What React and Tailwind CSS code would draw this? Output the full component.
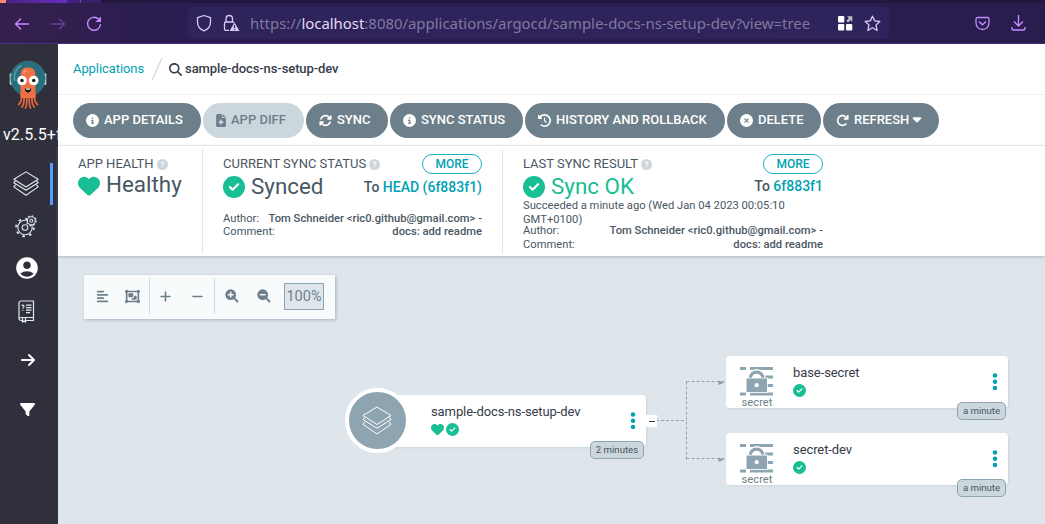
import React from 'react';
import {
  FaCircleInfo, FaFileMedical, FaArrowsRotate, FaClockRotateLeft, FaCircleXmark, FaArrowRotateRight,
  FaCaretDown, FaCircleQuestion, FaHeart, FaCircleCheck, FaMagnifyingGlass, FaAlignLeft, FaObjectGroup,
  FaPlus, FaMinus, FaArrowRight, FaFilter,
} from 'react-icons/fa6';
import { MdAccountCircle } from 'react-icons/md';

function Layers({ size, width = 1.2 }) {
  return (
    <svg width={size} height={size} viewBox="0 0 30 30" fill="none" stroke="currentColor" strokeWidth={width} strokeLinejoin="round" className="shrink-0">
      <path d="M15 1 29 9.5 15 18.5 1 9.5Z" />
      <path d="M3 11.2 1 13.5 15 22.3 29 13.5 27 11.2" />
      <path d="M3 15.7 1 18.300 15 28 29 18.300 27 15.7" />
    </svg>
  );
}

function Zoom({ minus }) {
  return (
    <svg width="14" height="14" viewBox="0 0 14 14" className="shrink-0">
      <circle cx="5.700" cy="5.700" r="5.400" fill="#6d7f8b" />
      <path d="M9 9 13 13" stroke="#6d7f8b" strokeWidth="1.900" />
      <path d={minus ? 'M2.800 5.700H8.600' : 'M2.800 5.700H8.600M5.700 2.800V8.600'} stroke="#f8fbfb" strokeWidth="1.500" />
    </svg>
  );
}

function Dots() {
  return (
    <svg width="6" height="18" viewBox="0 0 6 18" fill="#00a2b3" className="ml-auto mr-[10.500px] mt-[17px] shrink-0">
      <circle cx="3" cy="2.500" r="2.250" /><circle cx="3" cy="8.700" r="2.250" /><circle cx="3" cy="14.900" r="2.250" />
    </svg>
  );
}

function Octopus() {
  return (
    <svg width="38" height="50" viewBox="0 0 38 50">
      <rect x="0.7" y="13" width="3" height="12" rx="1.5" fill="#c3dce8" />
      <rect x="34.3" y="13" width="3" height="12" rx="1.5" fill="#c3dce8" />
      <circle cx="19" cy="18.500" r="17.300" fill="#266e7b" stroke="#3d8794" strokeWidth="0.6" />
      <path d="M5.500 21C4.500 13 8 7.500 12.500 5.500" stroke="#5aa0a9" strokeWidth="1.4" fill="none" />
      <path d="M11.500 16C11.500 9 14.500 7.500 19 7.500S26.500 9 26.500 16V35H11.500Z" fill="#ee7043" />
      <path d="M12.500 34C13 40 12 43 9.500 44.500M15 34C15.500 41 15 45 12.800 47M17.800 34C18 42 18 46 16.500 48M20.300 34C20 42 20.500 46 21.500 48M23 34C22.500 41 23.500 45 25.200 47M25.500 34C25 40 26.500 43 28.500 44.500" fill="none" stroke="#e0633c" strokeWidth="1.800" strokeLinecap="round" />
      <path d="M11.500 34H26.500V38H11.500Z" fill="#ee7043" />
      <path d="M15 12.500C15.500 11 16.500 10.500 17.500 10.500" stroke="#f79a75" strokeWidth="2" fill="none" strokeLinecap="round" />
      <circle cx="13" cy="20.500" r="4.800" fill="#fff" />
      <circle cx="24.700" cy="20.500" r="4.800" fill="#fff" />
      <circle cx="13" cy="20.500" r="1.700" fill="#15181f" />
      <circle cx="24.700" cy="20.500" r="1.700" fill="#15181f" />
      <path d="M15.800 28.500H22.200C22 31.500 20.500 32.500 19 32.500S16 31.500 15.800 28.500Z" fill="#15181f" />
      <path d="M17 28.500H21V29.700H17Z" fill="#fff" />
    </svg>
  );
}

function Gears() {
  return (
    <svg width="22" height="23" viewBox="0 0 22 23" fill="none" stroke="#dbe0e8" strokeWidth="1.1">
      <circle cx="10" cy="12.500" r="7.200" />
      <circle cx="10" cy="12.500" r="8.900" strokeWidth="1.900" strokeDasharray="2.600 4.390" />
      <circle cx="10" cy="12.500" r="2.800" />
      <circle cx="16.300" cy="5.800" r="4" fill="#30303d" />
      <circle cx="16.300" cy="5.800" r="4.900" strokeWidth="1.300" strokeDasharray="1.600 2.240" />
      <circle cx="16.300" cy="5.800" r="1.500" />
    </svg>
  );
}

function Book() {
  return (
    <svg width="17" height="23" viewBox="0 0 17 23" fill="none" stroke="#e3e6ec" strokeWidth="1.2">
      <path d="M3 1H15.500V20.500H7.500M4.500 20.500H3C1.800 20.500 1 19.500 1 18.500V3C1 1.800 1.800 1 3 1M15.500 17.500H3C1.800 17.500 1 18 1 19" />
      <path d="M4.500 18V22L6 20.800 7.500 22V18" />
      <path d="M3.800 6C4 4.800 6 4.800 6 6.200 6 7 4.900 7.200 4.900 8.500M4.900 9.700V10.700M8 5.200H13.500M8 7.700H13.500M8 10.200H13.500M8 12.700H12" />
    </svg>
  );
}

function BrowserBar() {
  return (
    <header className="h-[44px] w-full flex flex-col bg-[#2b1e4e]">
      <div className="h-[3px] flex bg-[#231640]">
        <div className="w-[6px] bg-[#ff8a71]" />
        <div className="w-[61px] bg-gradient-to-r from-[#482280] to-[#6a2fc0]" />
        <div className="w-[13px] bg-[#43207f]" />
        <div className="w-px bg-[#6d5796]" />
        <div className="w-[20px] bg-[#36206a]" />
      </div>
      <div className="flex h-[40px] items-center bg-gradient-to-r from-[#34204e] via-[#2b1d50] via-15% to-[#291d4e]">
        <div className="flex w-[188px] pl-[14px] items-center text-[#c58aff]">
          <svg width="16" height="16" viewBox="0 0 16 16" fill="none" stroke="currentColor" strokeWidth="1.3" className="mt-[1px]"><path d="M15 8H1.500M7 2.500 1.500 8 7 13.500" /></svg>
          <svg width="16" height="16" viewBox="0 0 16 16" fill="none" stroke="#65428c" strokeWidth="1.3" className="ml-[20px] mt-[1px]"><path d="M1 8H14.500M9 2.500 14.500 8 9 13.500" /></svg>
          <svg width="16" height="16" viewBox="0 0 16 16" fill="none" stroke="currentColor" strokeWidth="1.4" className="ml-[20px] mt-[1px]"><path d="M12.700 3.300A6.500 6.500 0 1 0 14.500 8" /><path d="M15 .5V6H9.500Z" fill="currentColor" stroke="none" /></svg>
        </div>
        <div className="flex h-[32px] w-[701px] items-center rounded-[4px] bg-[#2e235a] pl-[8px]">
          <svg width="16" height="18" viewBox="0 0 16 18" fill="none" stroke="#d8c8f4" strokeWidth="1.3"><path d="M8 1.500 14.500 3.700V8C14.500 12.500 11.500 15.500 8 16.800 4.500 15.500 1.500 12.500 1.500 8V3.700Z" strokeLinejoin="round" /></svg>
          <svg width="17" height="18" viewBox="0 0 17 18" className="ml-[11px]" fill="none" stroke="#d8c8f4" strokeWidth="1.3"><path d="M6 16.300H3C2 16.300 1.500 15.800 1.500 15V9.300C1.500 8.500 2 8 3 8H9.500C10.200 8 10.800 8.300 10.800 9M3 8V4.800C3 2.800 4.400 1.500 6.200 1.500S9.500 2.800 9.500 4.800V8" /><path d="M11.500 8.500 16.500 17H6.500Z" fill="#d8c8f4" stroke="none" /><path d="M11.500 11.200V14M11.500 15V16" stroke="#2e235a" /></svg>
          <span className="ml-[10px] w-[587px] whitespace-nowrap font-['Noto_Sans'] text-[14.91px] leading-[20px] text-[#82789f]">https://<span className="text-[#e3daf5]">localhost</span>:8080/applications/argocd/sample-docs-ns-setup-dev?view=tree</span>
          <svg width="15" height="15" viewBox="0 0 15 15" fill="#fff" className="ml-px"><rect x="0" width="6.300" height="6.500" rx="1" /><rect x="0" y="8" width="6.300" height="6.500" rx="1" /><rect x="8" y="8" width="6.300" height="6.500" rx="1" /><path d="M9 .3H14.300V6L12.700 4.200 10 6.500 8.300 5 10.800 2.200Z" fill="#c0bcc8" /></svg>
          <svg width="17" height="17" viewBox="0 0 17 17" className="ml-[11px]" fill="none" stroke="#d8c8f4" strokeWidth="1.3" strokeLinejoin="round"><path d="M8.500 1.200 10.700 5.900 15.800 6.500 12 10 13.100 15.500 8.500 12.800 3.900 15.500 5 10 1.200 6.500 6.300 5.900Z" /></svg>
        </div>
        <svg width="15" height="15" viewBox="0 0 15 15" className="ml-[86px]" fill="none" stroke="#c58aff" strokeWidth="1.3"><path d="M2.500 1.500H12.500C13.300 1.500 14 2 14 3V7A6.500 6.500 0 0 1 1 7V3C1 2 1.700 1.500 2.500 1.500Z" /><path d="M4 5.500 7.500 8.700 11 5.500" strokeWidth="1.500" /></svg>
        <svg width="15" height="16" viewBox="0 0 15 16" className="ml-[21px]" fill="none" stroke="#c58aff" strokeWidth="1.4"><path d="M7.500 0V10.500M3 6.500 7.500 11 12 6.500M1 12V13.500C1 14.500 1.500 15 2.500 15H12.500C13.500 15 14 14.500 14 13.500V12" /></svg>
      </div>
      <div className="h-px bg-[#43317a]" />
    </header>
  );
}

function Sidebar() {
  return (
    <nav className="flex h-[480px] w-[58px] shrink-0 flex-col overflow-hidden bg-[#30303d] text-white">
      <div className="h-[70px] pl-[9px] pt-[16px]"><Octopus /></div>
      <div className="mt-[11px] h-[20px] pl-[3px] text-[16px] leading-[20px] tracking-[0.1px] whitespace-nowrap">v2.5.5+f</div>
      <div className="mt-[18px] flex h-[42px] items-center justify-between pl-[13px] pr-[5px] text-[#e3e6ec]">
        <Layers size={26} width={1.3} />
        <div className="h-[42px] w-[3px] bg-[#559dfb]" />
      </div>
      <div className="mt-[10px] h-[23px] pl-[15px]"><Gears /></div>
      <div className="mt-[17px] h-[26px] pl-[14px]"><MdAccountCircle size={26} /></div>
      <div className="mt-[19px] h-[23px] pl-[18px]"><Book /></div>
      <div className="mt-[29px] h-[18px] pl-[20px]"><FaArrowRight size={16} /></div>
      <div className="mt-[32px] h-[18px] pl-[20px]"><FaFilter size={15} /></div>
    </nav>
  );
}

function Pill({ icon: Icon, label, className, caret, iconClass = 'w-[13px]' }) {
  return (
    <button className={`flex h-[35px] shrink-0 items-center rounded-[18px] pl-[13px] text-[13px] font-medium whitespace-nowrap ${className}`}>
      <Icon className={`h-[13px] shrink-0 ${iconClass}`} />
      <span className="ml-[5px] leading-[18px]">{label}</span>
      {caret && <FaCaretDown size={14} className="ml-[1px] mb-[2px] shrink-0" />}
    </button>
  );
}

function Title({ children, more }) {
  return (
    <div className="flex h-[20px] items-center text-[13px]">
      <span className="whitespace-nowrap">{children}</span>
      <FaCircleQuestion size={11} className="ml-[3px] text-[#ccd6dd]" />
      {more && <button className="ml-auto h-[20px] w-[60px] rounded-full border border-[#18b0c2] text-[12px] leading-[18px] font-medium text-[#00a2b3]">MORE</button>}
    </div>
  );
}

function Field({ label, value, className }) {
  return (
    <div className={`flex justify-between whitespace-nowrap text-[11.2px] leading-[13px] ${className}`}>
      <span>{label}</span>
      <span className="font-medium tracking-[0.02px]">{value}</span>
    </div>
  );
}

function StatusPanel() {
  return (
    <section className="relative z-10 flex h-[110px] bg-white pt-[3px] text-[#495763] shadow-[0_1px_3px_rgba(120,140,155,0.5)]">
      <div className="h-[105px] w-[145px] border-r border-[#dee6eb] pl-[20px] pt-[5px]">
        <Title>APP HEALTH</Title>
        <div className="flex h-[24px] items-center text-[22.4px] leading-[24px]">
          <FaHeart size={22} className="text-[#18be94]" /><span className="mb-[4px] ml-[6px]">Healthy</span>
        </div>
      </div>
      <div className="h-[105px] w-[300px] border-r border-[#dee6eb] px-[20px] pt-[5px]">
        <Title more>CURRENT SYNC STATUS</Title>
        <div className="flex h-[26px] items-center text-[22.4px] leading-[24px]">
          <FaCircleCheck size={22} className="text-[#18be94]" /><span className="mb-[2px] ml-[6px]">Synced</span>
          <span className="ml-auto text-[14px] font-medium whitespace-nowrap">To <span className="text-[#00a2b3]">HEAD (6f883f1)</span></span>
        </div>
        <Field label="Author:" value="Tom Schneider <ric0.github@gmail.com> -" className="mt-[12px]" />
        <Field label="Comment:" value="docs: add readme" />
      </div>
      <div className="h-[105px] w-[340px] px-[20px] pt-[5px]">
        <Title more>LAST SYNC RESULT</Title>
        <div className="flex h-[26px] items-center text-[22.4px] leading-[24px] text-[#18be94]">
          <FaCircleCheck size={22} /><span className="mb-[2px] ml-[6px]">Sync OK</span>
          <span className="ml-auto text-[14px] leading-[24px] mt-[-2px] font-medium whitespace-nowrap text-[#495763]">To <span className="text-[#00a2b3]">6f883f1</span></span>
        </div>
        <div className="-mt-px text-[11.2px] leading-[14px] whitespace-nowrap">Succeeded a minute ago (Wed Jan 04 2023 00:05:10<br />GMT+0100)</div>
        <Field label="Author:" value="Tom Schneider <ric0.github@gmail.com> -" className="-mt-[3px]" />
        <Field label="Comment:" value="docs: add readme" className="mt-px" />
      </div>
    </section>
  );
}

function GraphToolbar() {
  return (
    <div className="absolute left-[26px] top-[19px] flex h-[44px] w-[251px] items-center bg-[#f8fbfb] pb-[2px] text-[#6d7f8b] shadow-[1px_1px_3px_#9fb3bf]">
      <FaAlignLeft size={13} className="ml-[12px]" />
      <FaObjectGroup size={15} className="ml-[16px]" />
      <div className="ml-[9px] h-[36px] w-px bg-[#ccd6dd]" />
      <FaPlus size={13} className="ml-[9px]" />
      <FaMinus size={13} className="ml-[19px]" />
      <div className="ml-[10px] h-[36px] w-px bg-[#ccd6dd]" />
      <div className="ml-[10px] flex gap-[18px]"><Zoom /><Zoom minus /></div>
      <div className="ml-[13px] h-[27px] w-[40px] border border-[#8fa4b1] bg-[#dee6eb] text-center text-[14.500px] leading-[25px]">100%</div>
    </div>
  );
}

function Age({ className, children }) {
  return <div className={`absolute flex h-[18px] items-center justify-center rounded-[5px] border border-[#8fa4b1] bg-[#ccd6dd] text-[9.600px] text-[#495763] ${className}`}>{children}</div>;
}

function SecretIcon() {
  return (
    <svg width="34" height="29" viewBox="0 0 34 29" fill="#8fa4b1">
      <path d="M0 0H6V3H0ZM10 0H33V3H10ZM0 25.500H6V28.500H0ZM10 25.500H33V28.500H10ZM25 8.500H33V11.500H25ZM27 17H33V20H27Z" />
      <path d="M7.700 12V11A8.900 8.900 0 0 1 25.500 11V12" fill="#fff" />
      <path d="M10.200 12V11.500A6.400 6.400 0 0 1 23 11.500V12" fill="none" stroke="#8fa4b1" strokeWidth="3.200" />
      <rect x="5.700" y="10.700" width="22" height="15" fill="#fff" />
      <rect x="6.500" y="11.500" width="20.500" height="13.500" />
      <circle cx="16.700" cy="18.200" r="2.100" fill="#fff" />
    </svg>
  );
}

function SecretNode({ name, className }) {
  return (
    <div className={`absolute left-[668px] flex h-[52px] w-[282px] rounded-[4px] bg-white shadow-[1px_1px_2px_#ccd6dd] ${className}`}>
      <div className="flex w-[62px] flex-col items-center pt-[11px] text-[11.2px] leading-[11px] text-[#6d7f8b]">
        <SecretIcon /><span className="mt-px">secret</span>
      </div>
      <div className="ml-[5px] pt-[8px] text-[13px] leading-[18px] text-[#363c4a]">
        <span className="tracking-[-0.08px]">{name}</span>
        <FaCircleCheck size={13} className="mt-[2px] text-[#18be94]" />
      </div>
      <Dots />
      <Age className="right-[2px] top-[46px] w-[49px]">a minute</Age>
    </div>
  );
}

function Graph() {
  return (
    <main className="relative h-[268px] overflow-hidden bg-[#dee6eb]">
      <GraphToolbar />
      <svg width="80" height="90" viewBox="0 0 80 90" className="absolute left-[588px] top-[120px]" fill="none" stroke="#8fa4b1">
        <path d="M0 44.500H40.500M40.500 5.500V83.500M40.500 5.500H80M40.500 82.500H80" strokeDasharray="3 2" />
        <path d="M72.500 4.500V9L78 6.800ZM72.500 81.500V86L78 83.800Z" fill="#999" stroke="none" />
      </svg>
      <div className="absolute left-[320px] top-[139px] flex h-[52px] w-[268px] rounded-[4px] bg-white pl-[53px] shadow-[1px_1px_2px_#ccd6dd]">
        <div className="pt-[8px] text-[13px] leading-[18px] text-[#363c4a] whitespace-nowrap">
          <span className="tracking-[-0.1px]">sample-docs-ns-setup-dev</span>
          <div className="mt-[2px] flex gap-[2px] text-[#18be94]"><FaHeart size={13} /><FaCircleCheck size={13} /></div>
        </div>
        <Dots />
        <div className="absolute -left-[33px] -top-[7px] flex h-[65px] w-[65px] items-center justify-center rounded-full border-4 border-white bg-[#8fa4b1] pr-px text-white"><Layers size={30} width={1} /></div>
        <div className="absolute -right-[11px] top-[20px] flex h-[12px] w-[11px] items-center justify-center bg-white"><div className="h-px w-[6px] bg-[#363c4a]" /></div>
        <Age className="right-[2px] top-[46px] w-[54px]">2 minutes</Age>
      </div>
      <SecretNode name="base-secret" className="top-[100px]" />
      <SecretNode name="secret-dev" className="top-[177px]" />
    </main>
  );
}

export default function App() {
  return (
    <div className="h-[524px] w-[1045px] overflow-hidden bg-white font-[Roboto,sans-serif]">
      <BrowserBar />
      <div className="flex">
        <Sidebar />
        <div className="w-[987px]">
          <div className="flex h-[51px] items-center border-b border-[#eff0f2] pl-[15px] text-[13px]">
            <a className="tracking-[-0.08px] text-[#00a2b3]">Applications</a>
            <svg width="12" height="24" viewBox="0 0 12 24" className="ml-[7px]" stroke="#ccd6dd" strokeWidth="1.2"><path d="M1 23 11 1" /></svg>
            <FaMagnifyingGlass size={13} className="ml-[6px] text-[#363c4a]" />
            <span className="ml-[3px] font-medium tracking-[-0.09px] text-[#363c4a]">sample-docs-ns-setup-dev</span>
          </div>
          <div className="flex h-[51px] items-center gap-[2px] border-b border-[#eff0f2] pl-[15px] text-white">
            <Pill icon={FaCircleInfo} label="APP DETAILS" className="w-[128px] bg-[#6d7f8b]" />
            <Pill icon={FaFileMedical} label="APP DIFF" iconClass="w-[10px]" className="w-[101px] bg-[#ccd6dd] text-[#6d7f8b]" />
            <Pill icon={FaArrowsRotate} label="SYNC" className="w-[82px] bg-[#6d7f8b]" />
            <Pill icon={FaCircleInfo} label="SYNC STATUS" className="w-[133px] bg-[#6d7f8b]" />
            <Pill icon={FaClockRotateLeft} label="HISTORY AND ROLLBACK" className="w-[200px] bg-[#6d7f8b]" />
            <Pill icon={FaCircleXmark} label="DELETE" className="w-[94px] bg-[#6d7f8b]" />
            <Pill icon={FaArrowRotateRight} label="REFRESH" className="w-[116px] bg-[#6d7f8b]" caret />
          </div>
          <StatusPanel />
          <Graph />
        </div>
      </div>
    </div>
  );
}
